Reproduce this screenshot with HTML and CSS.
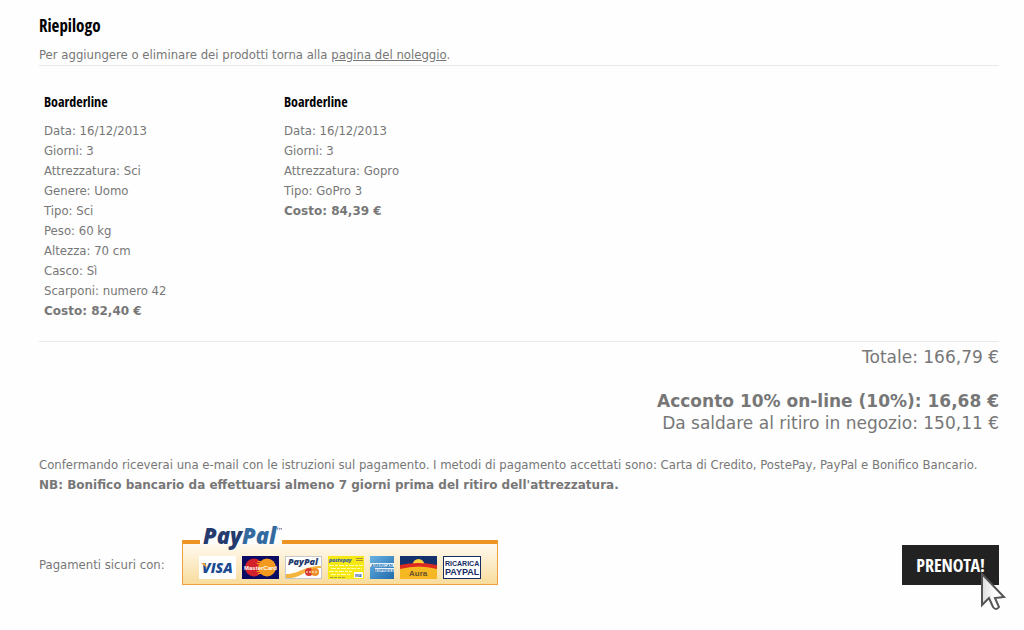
FILE: index.html
```html
<!DOCTYPE html>
<html lang="it">
<head>
  <meta charset="UTF-8">
  <meta name="viewport" content="width=device-width, initial-scale=1.0">
  <title>Riepilogo</title>
  <link rel="stylesheet" href="styles.css">
</head>
<body>
  <main class="summary">
    <header class="summary-head">
      <h1>Riepilogo</h1>
      <p>Per aggiungere o eliminare dei prodotti torna alla <a href="#">pagina del noleggio</a>.</p>
    </header>

    <section class="products">
      <div class="product">
        <h2>Boarderline</h2>
        <ul>
          <li>Data: 16/12/2013</li>
          <li>Giorni: 3</li>
          <li>Attrezzatura: Sci</li>
          <li>Genere: Uomo</li>
          <li>Tipo: Sci</li>
          <li>Peso: 60 kg</li>
          <li>Altezza: 70 cm</li>
          <li>Casco: Sì</li>
          <li>Scarponi: numero 42</li>
          <li class="important">Costo: 82,40 €</li>
        </ul>
      </div>
      <div class="product">
        <h2>Boarderline</h2>
        <ul>
          <li>Data: 16/12/2013</li>
          <li>Giorni: 3</li>
          <li>Attrezzatura: Gopro</li>
          <li>Tipo: GoPro 3</li>
          <li class="important">Costo: 84,39 €</li>
        </ul>
      </div>
    </section>

    <section class="totals">
      <p class="total">Totale: 166,79 €</p>
      <p><strong>Acconto 10% on-line (10%): 16,68 €</strong></p>
      <p>Da saldare al ritiro in negozio: 150,11 €</p>
    </section>

    <section class="notes">
      <p>Confermando riceverai una e-mail con le istruzioni sul pagamento. I metodi di pagamento accettati sono: Carta di Credito, PostePay, PayPal e Bonifico Bancario.</p>
      <p class="important">NB: Bonifico bancario da effettuarsi almeno 7 giorni prima del ritiro dell'attrezzatura.</p>
    </section>

    <footer class="checkout">
      <span class="secure">Pagamenti sicuri con:</span>
      <div class="paypal">
        <svg class="paypal-logo" width="82" height="36" viewBox="0 0 82 36">
          <text x="3" y="25" font-size="22"><tspan fill="#253b6e">Pay</tspan><tspan fill="#336a9f">Pal</tspan></text>
          <path d="M76 9h3M77.500 9v2M79.500 11V9l1 1 1-1v2" fill="none" stroke="#5a6d8f" stroke-width=".6"/>
        </svg>
        <div class="cards">
          <svg width="37" height="23" viewBox="0 0 37 23">
            <rect width="37" height="23" fill="#fff"/>
            <text x="3" y="17" font-size="14" fill="#1b4a91">VISA</text>
            <path d="M2 7h4l2 5z" fill="#e9a33a"/>
          </svg>
          <svg width="37" height="23" viewBox="0 0 37 23">
            <rect width="37" height="23" fill="#0b0b63"/>
            <circle cx="12" cy="11.500" r="9" fill="#d3222a"/>
            <circle cx="25" cy="11.500" r="9" fill="#f39a1e"/>
            <path d="M18.500 5.500h-3m3.200 2h-4m4 8h-4m4 2h-3" stroke="#f39a1e"/>
            <text class="plain" x="2" y="14" font-size="6" fill="#fff">MasterCard</text>
          </svg>
          <svg width="37" height="23" viewBox="0 0 37 23">
            <rect x=".5" y=".5" width="36" height="22" fill="#fff" stroke="#c5c9cf"/>
            <path d="M1 18c13 0 18-8 35-8v2c-15 0-18 9-30 10H1z" fill="#f5b43c"/>
            <text x="3" y="9" font-size="9" fill="#253b6e">PayPal</text>
            <circle cx="24" cy="16" r="4" fill="#d8392c"/>
            <circle cx="30" cy="16" r="4" fill="#ef8f28"/>
            <path d="M21 16h12" stroke="#fff" stroke-dasharray="2 1"/>
          </svg>
          <svg width="36" height="23" viewBox="0 0 36 23">
            <rect width="36" height="23" fill="#f5e814"/>
            <text x="1" y="6" font-size="5" fill="#3a62a5">postepay</text>
            <path d="M28 2.500h7M28 4.500h7" stroke="#a58d3c"/>
            <path d="M1 9.500h34M3 12.500h31M1 15.500h23M3 18.500h20" stroke="#fffbb0" stroke-dasharray="5 1 3 1"/>
            <path d="M2 21.500h16" stroke="#98a044" stroke-dasharray="3 1"/>
            <rect x="26" y="16" width="9" height="6" fill="#fff"/>
            <text x="27" y="21" font-size="3" fill="#27549a">VISA</text>
          </svg>
          <svg width="24" height="23" viewBox="0 0 24 23">
            <defs>
              <linearGradient id="amex" x1="0" y1="0" x2="1" y2="1">
                <stop offset="0" stop-color="#68b2e2"/>
                <stop offset="1" stop-color="#206bad"/>
              </linearGradient>
            </defs>
            <rect width="24" height="23" fill="url(#amex)"/>
            <path d="M0 9h24M5 14h19" stroke="#e6f3fb" stroke-width="4"/>
            <text class="plain" x="1" y="11" font-size="4" fill="#2b77b5">AMERICAN</text>
            <text class="plain" x="5" y="16" font-size="4" fill="#2b77b5">EXPRESS</text>
          </svg>
          <svg width="37" height="23" viewBox="0 0 37 23">
            <rect width="37" height="23" fill="#14306d"/>
            <circle cx="18.500" cy="9" r="6" fill="#fbd038"/>
            <path d="M0 11q18-6 37 0v12H0z" fill="#f5b722"/>
            <path d="M0 9q18-4 37 0v4q-18-5-37 0z" fill="#dc2a22"/>
            <text class="plain" x="9" y="20" font-size="8" fill="#66512e">Aura</text>
          </svg>
          <svg width="38" height="23" viewBox="0 0 38 23">
            <rect x=".5" y=".5" width="37" height="22" fill="#fff" stroke="#172c61"/>
            <text class="plain" x="2" y="10" font-size="7" fill="#172c61">RICARICA</text>
            <text class="plain" x="2" y="19" font-size="9" fill="#172c61">PAYPAL</text>
          </svg>
        </div>
      </div>
      <div class="book">
        <button type="button">PRENOTA!</button>
        <svg class="cursor" width="28" height="42" viewBox="0 0 28 42">
          <defs>
            <linearGradient id="arrow">
              <stop offset="0" stop-color="#ddd"/>
              <stop offset=".6" stop-color="#fff"/>
            </linearGradient>
          </defs>
          <path d="M3 3v31l7-7 4 9q3 4 6 0l-4-9 9-1z" fill="url(#arrow)" stroke="#555" stroke-width="2"/>
        </svg>
      </div>
    </footer>
  </main>
</body>
</html>
```
FILE: styles.css
```css
body {
  margin: 0;
  background: #fefefe;
  color: #777;
  font-family: "DejaVu Sans Condensed", "DejaVu Sans", sans-serif;
  font-size: 13px;
  line-height: 20px;
}

h1,
h2,
p,
ul {
  margin: 0;
  padding: 0;
}

h1,
h2 {
  color: #000;
  font-family: "Open Sans Condensed", sans-serif;
  font-weight: 300;
}

.summary {
  padding: 16px 25px 44px 39px;
}

.summary-head {
  border-bottom: 1px solid #e8e8e8;
}

h1 {
  font-size: 17px;
  line-height: 20px;
  margin-bottom: 9px;
}

a {
  color: inherit;
}

.important {
  font-family: "DejaVu Sans", sans-serif;
  font-size: 12px;
  font-weight: bold;
}

.products {
  display: flex;
  padding: 26px 0 20px;
  border-bottom: 1px solid #e8e8e8;
}

.product {
  width: 230px;
  padding: 0 5px;
}

h2 {
  font-size: 14px;
  line-height: 20px;
  margin-bottom: 9px;
}

ul {
  list-style: none;
}

.totals {
  padding-top: 4px;
  font-family: "DejaVu Sans", sans-serif;
  font-size: 17px;
  line-height: 22px;
  text-align: right;
}

.total {
  margin-bottom: 22px;
}

.notes {
  padding-top: 21px;
}

.checkout {
  display: flex;
  align-items: flex-end;
  margin-top: 45px;
}

.secure {
  width: 143px;
  line-height: 40px;
}

.paypal {
  position: relative;
  padding: 12px 16px 5px;
  border: 1px solid #eda03c;
  border-top: 4px solid #ee9425;
  background: linear-gradient(#fffaf0, #f8dc9c);
}

.paypal-logo {
  position: absolute;
  top: -25px;
  left: 17px;
  background: linear-gradient(#fefefe 25px, transparent 25px);
}

.paypal text {
  font-family: "Open Sans", sans-serif;
  font-style: italic;
  font-weight: 800;
}

.paypal .plain {
  font-family: "Liberation Sans", sans-serif;
  font-style: normal;
  font-weight: bold;
}

.cards {
  display: flex;
  gap: 6px;
}

.book {
  position: relative;
  margin-left: auto;
}

button {
  padding: 0 14px;
  border: 0;
  background: #222;
  color: #fff;
  font-family: "Open Sans Condensed", sans-serif;
  font-size: 18px;
  font-weight: 300;
  line-height: 40px;
}

.cursor {
  position: absolute;
  top: 26px;
  right: -8px;
}
```
